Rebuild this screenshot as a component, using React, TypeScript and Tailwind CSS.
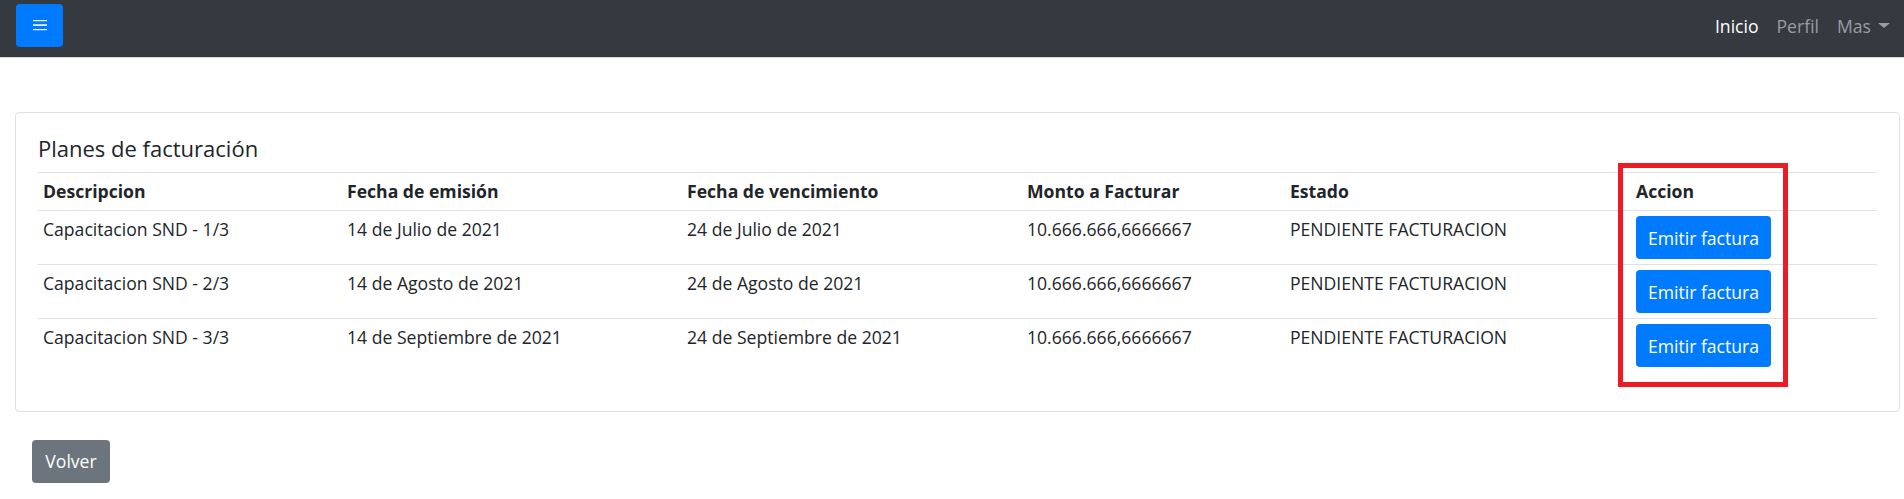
import React from "react";

type Plan = {
  descripcion: string;
  emision: string;
  vencimiento: string;
  monto: string;
  estado: string;
};

const plans: Plan[] = [
  {
    descripcion: "Capacitacion SND - 1/3",
    emision: "14 de Julio de 2021",
    vencimiento: "24 de Julio de 2021",
    monto: "10.666.666,6666667",
    estado: "PENDIENTE FACTURACION",
  },
  {
    descripcion: "Capacitacion SND - 2/3",
    emision: "14 de Agosto de 2021",
    vencimiento: "24 de Agosto de 2021",
    monto: "10.666.666,6666667",
    estado: "PENDIENTE FACTURACION",
  },
  {
    descripcion: "Capacitacion SND - 3/3",
    emision: "14 de Septiembre de 2021",
    vencimiento: "24 de Septiembre de 2021",
    monto: "10.666.666,6666667",
    estado: "PENDIENTE FACTURACION",
  },
];

const cols = "grid grid-cols-[304px_340px_340px_263px_346px_1fr]";

export default function App() {
  return (
    <div className="relative min-h-screen bg-white font-['Open_Sans',sans-serif] text-[17.6px] text-[#212529]">
      {/* Navbar */}
      <nav className="h-[58px] bg-[#343a40] border-b border-[#d6d6d6] flex items-start justify-between pt-[4px] pl-[16px] pr-[6px]">
        <button className="w-[47px] h-[43px] rounded-[4px] bg-[#007bff] flex items-center justify-center">
          <svg width="14" height="11" viewBox="0 0 14 11">
            <rect x="0" y="0" width="14" height="1.2" fill="#fff" />
            <rect x="0" y="4.2" width="14" height="1.8" fill="#e6eefc" />
            <rect x="0" y="9" width="14" height="1.2" fill="#fff" />
          </svg>
        </button>
        <div className="flex items-center h-[43px] leading-[26px]">
          <a className="px-[9px] text-white">Inicio</a>
          <a className="px-[9px] text-[#9a9da0]">Perfil</a>
          <a className="pl-[9px] pr-[8px] text-[#9a9da0] flex items-center">
            Mas
            <span className="ml-[7px] w-0 h-0 border-t-[5px] border-t-[#9a9da0] border-x-[6px] border-x-transparent" />
          </a>
        </div>
      </nav>

      <main className="pt-[54px] pl-[15px] pr-[4px]">
        {/* Card */}
        <div className="border border-[#dfdfdf] rounded-[4px] p-[22px]">
          <h5 className="text-[22px] leading-[26px] h-[26px] mb-[11px] font-medium">
            Planes de facturación
          </h5>

          <div className="mb-[17px]">
            <div className={`${cols} border-t border-[#dee2e6] h-[38px] font-bold leading-[26px]`}>
              <div className="px-[5px] pt-[5px]">Descripcion</div>
              <div className="px-[5px] pt-[5px]">Fecha de emisión</div>
              <div className="px-[5px] pt-[5px]">Fecha de vencimiento</div>
              <div className="px-[5px] pt-[5px]">Monto a Facturar</div>
              <div className="px-[5px] pt-[5px]">Estado</div>
              <div className="px-[5px] pt-[5px]">Accion</div>
            </div>
            {plans.map((p) => (
              <div
                key={p.descripcion}
                className={`${cols} border-t border-[#dee2e6] h-[54px] leading-[26px]`}
              >
                <div className="px-[5px] pt-[5px]">{p.descripcion}</div>
                <div className="px-[5px] pt-[5px]">{p.emision}</div>
                <div className="px-[5px] pt-[5px]">{p.vencimiento}</div>
                <div className="px-[5px] pt-[5px]">{p.monto}</div>
                <div className="px-[5px] pt-[5px]">{p.estado}</div>
                <div className="px-[5px] pt-[5px]">
                  <button className="w-[135px] h-[43px] rounded-[4px] bg-[#007bff] text-white">
                    Emitir factura
                  </button>
                </div>
              </div>
            ))}
          </div>
        </div>

        <div className="pt-[28px] pl-[17px]">
          <button className="w-[78px] h-[43px] rounded-[4px] bg-[#6c757d] text-white">
            Volver
          </button>
        </div>
      </main>

      {/* annotation box around the action column */}
      <div className="absolute left-[1618px] top-[163px] w-[170px] h-[224px] border-[5px] border-[#ed1c24]" />
    </div>
  );
}
